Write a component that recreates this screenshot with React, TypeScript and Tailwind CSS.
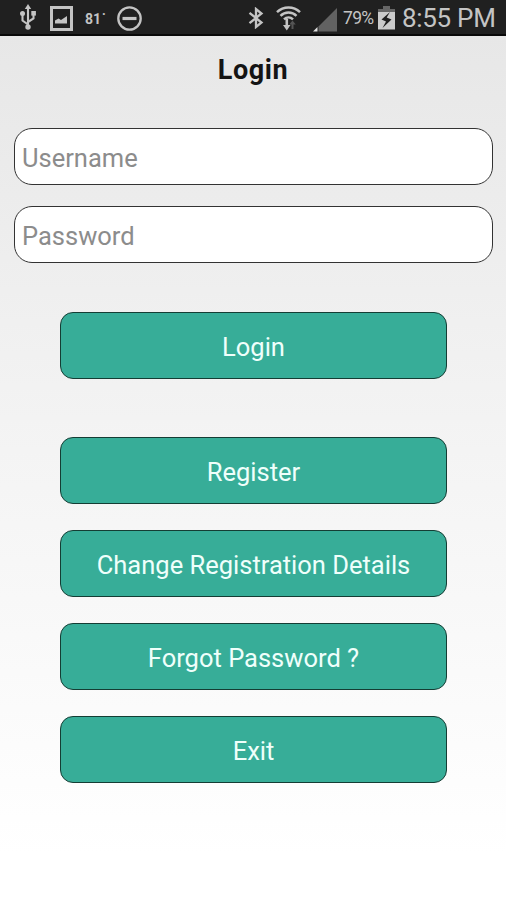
import React from 'react';

const UsbIcon: React.FC = () => (
  <svg className="w-[18px] h-[26px]" viewBox="0 0 18 26" fill="none" stroke="#c4c4c4" strokeWidth="2.1">
    <path d="M9 4v18M9 20.500l-5.500-4V10M9 18l5.500-3.500V9" />
    <path d="M9 0l3.200 5H5.800z" fill="#c4c4c4" stroke="none" />
    <circle cx="9" cy="23" r="2.700" fill="#c4c4c4" stroke="none" />
    <circle cx="3.500" cy="9.500" r="2.500" fill="#c4c4c4" stroke="none" />
    <path d="M12.300 7h4.600v4.600h-4.600z" fill="#c4c4c4" stroke="none" />
  </svg>
);

const PictureIcon: React.FC = () => (
  <svg className="w-[23px] h-[25px]" viewBox="0 0 23 25">
    <path d="M1.500 1.500h20v22h-20z" fill="none" stroke="#c4c4c4" strokeWidth="3" />
    <path d="M5 17.500v-3l3.500-2 2.500 1.500 6-4v7.500z" fill="#c4c4c4" />
  </svg>
);

const BlockedIcon: React.FC = () => (
  <svg className="w-[25px] h-[25px]" viewBox="0 0 25 25" fill="none" stroke="#c4c4c4">
    <circle cx="12.500" cy="12.500" r="11.200" strokeWidth="2.300" />
    <path d="M5.500 12.500h14" strokeWidth="3.200" />
  </svg>
);

const BluetoothIcon: React.FC = () => (
  <svg className="w-[16px] h-[22px]" viewBox="0 0 16 22" fill="none" stroke="#c4c4c4" strokeWidth="2.300">
    <path d="M1.500 5.800l12 9.700L8 20V2l5.500 4.500-12 9.700" />
  </svg>
);

const WifiIcon: React.FC = () => (
  <svg className="w-[25px] h-[25px]" viewBox="0 0 25 25" fill="none" stroke="#c4c4c4" strokeWidth="2.500">
    <path d="M1 6.200C7.500-.1 17.500-.1 24 6.200M4.500 9.900c4.500-4.400 11.500-4.400 16 0M8 13.400c2.600-2.500 6.400-2.500 9 0" />
    <path d="M10.800 13v7" strokeWidth="2.600" />
    <path d="M7 19h7.500l-3.700 5.500z" fill="#c4c4c4" stroke="none" />
    <path d="M16.500 23v-6" stroke="#555" strokeWidth="2" />
    <path d="M13.300 18.500h6.400l-3.200-4z" fill="#555" stroke="none" />
  </svg>
);

const SignalIcon: React.FC = () => (
  <svg className="w-[25px] h-[24px]" viewBox="0 0 25 24">
    <path d="M5.500 23.500v-5L24 0v23.500z" fill="#626262" />
    <path d="M0 23.500h4.500v-4.500z" fill="#e2e2e2" />
  </svg>
);

const BatteryIcon: React.FC = () => (
  <svg className="w-[17px] h-[24px]" viewBox="0 0 17 24">
    <path d="M5 0h7v3h5v4H0V3h5z" fill="#666" />
    <path d="M0 6h17v17.500H0z" fill="#cbcbcb" />
    <path d="M12 6L3.500 13.500l4.500 2L4.500 22l9-8.500-4.800-2z" fill="#202020" />
  </svg>
);

const StatusBar: React.FC = () => (
  <header className="flex h-9 items-center bg-[#202020] text-[#c4c4c4] border-b-2 border-[#090909] pl-[19px]">
    <UsbIcon />
    <div className="ml-[13px] mt-0.5"><PictureIcon /></div>
    <span className="ml-3 mt-[3px] w-[22px] text-[14px] font-bold leading-none whitespace-nowrap">81<span className="ml-px">˙</span></span>
    <div className="ml-[10px] mt-0.5"><BlockedIcon /></div>
    <div className="ml-[106px] mt-0.5"><BluetoothIcon /></div>
    <div className="ml-3 mt-0.5"><WifiIcon /></div>
    <div className="ml-3 mt-1.5"><SignalIcon /></div>
    <span className="ml-[5px] mt-1 w-[35px] text-[17.500px] leading-none tracking-[-0.700px]">79%</span>
    <div className="mt-0.5"><BatteryIcon /></div>
    <span className="ml-[7px] mt-0.5 text-[26px] leading-none tracking-[-0.300px] whitespace-nowrap">8:55 PM</span>
  </header>
);

const inputClass =
  'block h-[57px] w-full rounded-[18px] border border-[#333] bg-white px-[7px] pt-[3px] text-[25.500px] text-gray-700 placeholder:text-[#8c8c8c] outline-none';

const ActionButton: React.FC<{ label: string }> = ({ label }) => (
  <button
    type="button"
    className="h-[67px] w-full rounded-[13px] border border-[#143d34] bg-[#37ad98] pt-[5px] text-[25.500px] leading-none text-[#effffb]"
  >
    {label}
  </button>
);

const App: React.FC = () => {
  return (
    <div className="h-[900px] w-[506px] overflow-hidden bg-linear-to-b from-[#e6e6e6] via-[#f4f4f4] to-white to-95% font-['Roboto','Liberation_Sans',sans-serif]">
      <StatusBar />

      <h1 className="pt-[18px] text-center text-[27px] font-bold leading-8 tracking-[0.600px] text-[#141414]">Login</h1>

      <form className="pt-[42px]" onSubmit={(e) => e.preventDefault()}>
        <div className="ml-3.5 w-[479px] space-y-[21px]">
          <input className={inputClass} type="text" placeholder="Username" />
          <input className={inputClass} type="password" placeholder="Password" />
        </div>

        <div className="ml-[60px] mt-[49px] w-[387px]">
          <ActionButton label="Login" />
          <div className="mt-[58px] space-y-[26px]">
            <ActionButton label="Register" />
            <ActionButton label="Change Registration Details" />
            <ActionButton label="Forgot Password ?" />
            <ActionButton label="Exit" />
          </div>
        </div>
      </form>
    </div>
  );
};

export default App;
